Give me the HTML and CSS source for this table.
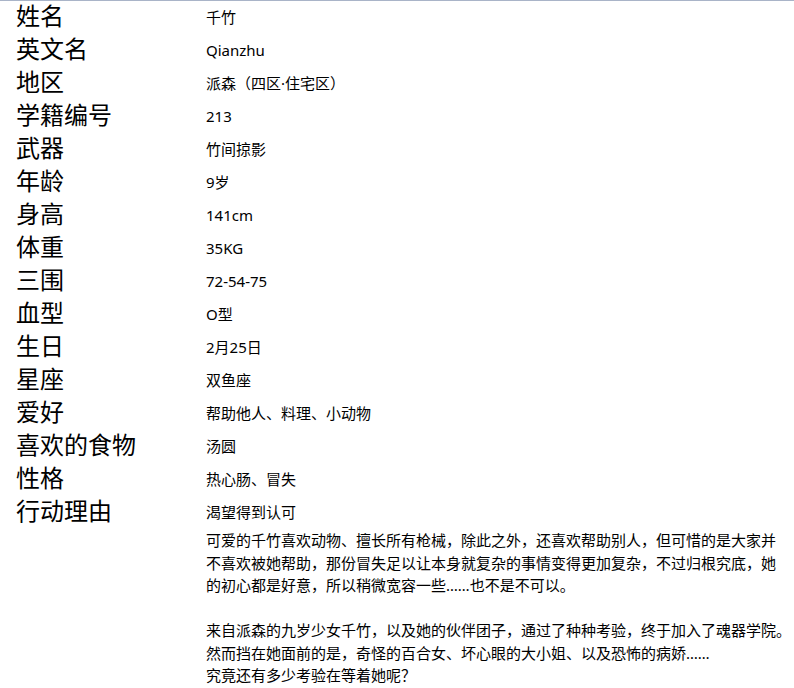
FILE: index.html
```html
<!DOCTYPE html>
<html lang="zh-CN">
<head>
  <meta charset="UTF-8" />
  <meta name="viewport" content="width=device-width, initial-scale=1.0"/>
  <title>千竹</title>
  <link rel="stylesheet" href="styles.css">
</head>
<body>
  <div class="profile">
    <div class="row"><div class="label">姓名</div><div class="value">千竹</div></div>
    <div class="row"><div class="label">英文名</div><div class="value">Qianzhu</div></div>
    <div class="row"><div class="label">地区</div><div class="value">派森（四区·住宅区）</div></div>
    <div class="row"><div class="label">学籍编号</div><div class="value">213</div></div>
    <div class="row"><div class="label">武器</div><div class="value">竹间掠影</div></div>
    <div class="row"><div class="label">年龄</div><div class="value">9岁</div></div>
    <div class="row"><div class="label">身高</div><div class="value">141cm</div></div>
    <div class="row"><div class="label">体重</div><div class="value">35KG</div></div>
    <div class="row"><div class="label">三围</div><div class="value">72-54-75</div></div>
    <div class="row"><div class="label">血型</div><div class="value">O型</div></div>
    <div class="row"><div class="label">生日</div><div class="value">2月25日</div></div>
    <div class="row"><div class="label">星座</div><div class="value">双鱼座</div></div>
    <div class="row"><div class="label">爱好</div><div class="value">帮助他人、料理、小动物</div></div>
    <div class="row"><div class="label">喜欢的食物</div><div class="value">汤圆</div></div>
    <div class="row"><div class="label">性格</div><div class="value">热心肠、冒失</div></div>
    <div class="row"><div class="label">行动理由</div><div class="value">渴望得到认可</div></div>

    <div class="story">
      <p>可爱的千竹喜欢动物、擅长所有枪械，除此之外，还喜欢帮助别人，但可惜的是大家并不喜欢被她帮助，那份冒失足以让本身就复杂的事情变得更加复杂，不过归根究底，她的初心都是好意，所以稍微宽容一些……也不是不可以。</p>
      <p class="lines">来自派森的九岁少女千竹，以及她的伙伴团子，通过了种种考验，终于加入了魂器学院。<br>然而挡在她面前的是，奇怪的百合女、坏心眼的大小姐、以及恐怖的病娇……<br>究竟还有多少考验在等着她呢？</p>
    </div>
  </div>
</body>
</html>
```

FILE: styles.css
```css
html, body {
  margin: 0;
  padding: 0;
}

body {
  padding: 0 8px;
  background: #fff;
  color: #000;
  font-family: "Noto Sans", "Noto Sans CJK SC", sans-serif;
  border-top: 1px solid #a9b4c8;
}

.profile {
  display: flex;
  flex-direction: column;
}

.row {
  display: grid;
  grid-template-columns: 198px 1fr;
  height: 33px;
}

.label {
  padding-left: 8px;
  font-size: 24px;
  line-height: 30px;
}

.value {
  font-size: 15px;
  line-height: 32px;
}

.story {
  margin-left: 198px;
  font-size: 15px;
  line-height: 22.5px;
}

.story p {
  margin: 0 0 22.5px;
}

/* explicit line breaks, the closing 。 may touch the edge */
.story .lines {
  white-space: nowrap;
}
```
